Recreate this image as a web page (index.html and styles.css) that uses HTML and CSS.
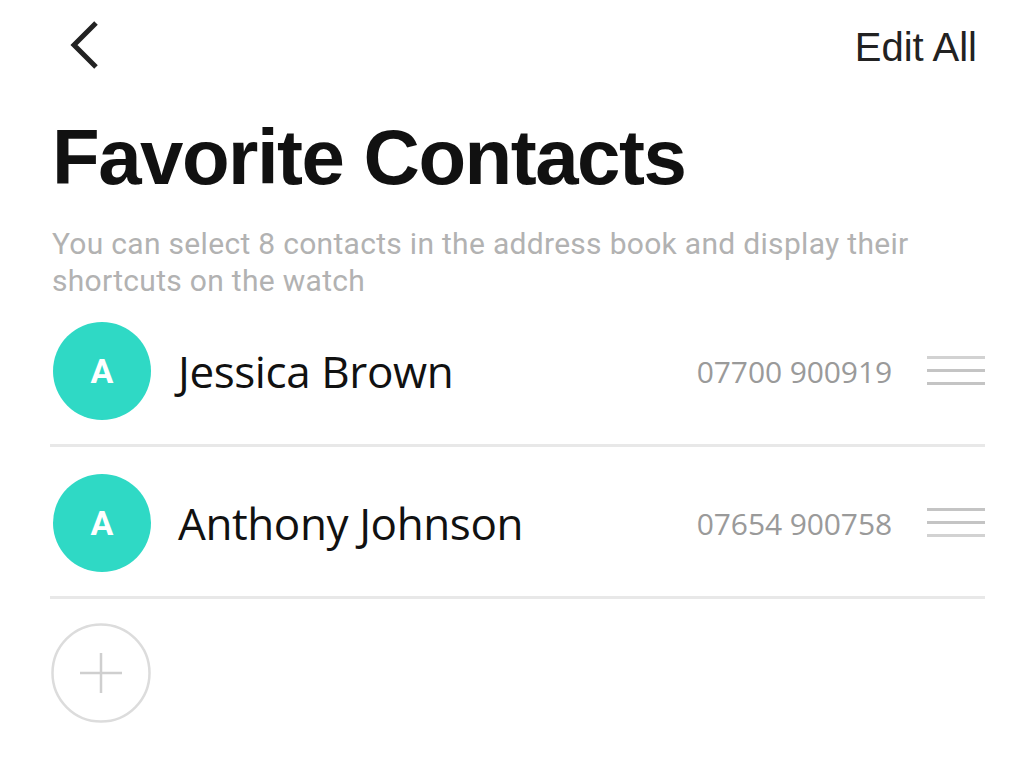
FILE: index.html
```html
<!DOCTYPE html>
<html lang="en">
<head>
<meta charset="utf-8">
<title>Favorite Contacts</title>
<link rel="stylesheet" href="styles.css">
</head>
<body>
<div class="screen">
  <header class="topbar">
    <button class="back" aria-label="Back">
      <svg width="32" height="50" viewBox="0 0 32 50"><path d="M26 3 L4 25 L26 47" fill="none" stroke="#222" stroke-width="5" stroke-linejoin="miter"/></svg>
    </button>
    <span class="edit">Edit All</span>
  </header>
  <h1 class="title">Favorite Contacts</h1>
  <p class="desc">You can select 8 contacts in the address book and display their shortcuts on the watch</p>
  <ul class="list">
    <li class="row">
      <div class="avatar">A</div>
      <div class="name">Jessica Brown</div>
      <div class="phone">07700 900919</div>
      <svg class="handle" width="58" height="34" viewBox="0 0 58 34"><rect x="0" y="2" width="58" height="3" fill="#d2d2d2"/><rect x="0" y="15" width="58" height="3" fill="#c4c4c4"/><rect x="0" y="28" width="58" height="3" fill="#c4c4c4"/></svg>
    </li>
    <li class="row">
      <div class="avatar">A</div>
      <div class="name">Anthony Johnson</div>
      <div class="phone">07654 900758</div>
      <svg class="handle" width="58" height="34" viewBox="0 0 58 34"><rect x="0" y="2" width="58" height="3" fill="#c4c4c4"/><rect x="0" y="15" width="58" height="3" fill="#c4c4c4"/><rect x="0" y="28" width="58" height="3" fill="#d2d2d2"/></svg>
    </li>
  </ul>
  <button class="add" aria-label="Add contact">
    <svg width="100" height="100" viewBox="0 0 100 100"><circle cx="50" cy="50" r="48.5" fill="none" stroke="#dcdcdc" stroke-width="2.5"/><path d="M29 50 H71 M50 30 V70" stroke="#cfcfcf" stroke-width="2.5"/></svg>
  </button>
</div>
</body>
</html>
```

FILE: styles.css
```css
html, body {
  margin: 0;
  padding: 0;
  background: #ffffff;
}

.screen {
  width: 1024px;
  height: 773px;
  box-sizing: border-box;
  padding: 0 39px 0 50px;
  font-family: Roboto, "Liberation Sans", sans-serif;
  overflow: hidden;
}

.topbar {
  height: 90px;
  display: flex;
  align-items: center;
  justify-content: space-between;
}

.back {
  border: 0;
  background: none;
  padding: 0;
  margin-left: 20px;
  display: flex;
}

.edit {
  font-family: "Liberation Sans", Arial, sans-serif;
  font-size: 40px;
  color: #222;
  margin-right: 8px;
  margin-top: 4px;
}

.title {
  margin: 28px 0 0 2px;
  font-family: "Liberation Sans", Arial, sans-serif;
  font-weight: 700;
  font-size: 78px;
  line-height: 78px;
  letter-spacing: -1.5px;
  color: #111;
}

.desc {
  margin: 29px 0 0 2px;
  font-family: Roboto, "Liberation Sans", sans-serif;
  font-size: 30px;
  line-height: 37px;
  letter-spacing: 0.3px;
  color: #b2b2b2;
  max-width: 900px;
}

.list {
  list-style: none;
  margin: -4px 0 0 0;
  padding: 0;
}

.row {
  display: flex;
  align-items: center;
  padding: 27px 0 24px 0;
  border-bottom: 3px solid #e8e8e8;
}

.avatar {
  width: 98px;
  height: 98px;
  border-radius: 50%;
  background: #2fd9c5;
  color: #fff;
  font-family: Roboto, sans-serif;
  font-weight: 700;
  font-size: 34px;
  display: flex;
  align-items: center;
  justify-content: center;
  margin-left: 3px;
  flex: none;
}

.name {
  flex: 1;
  margin-left: 27px;
  font-family: "Open Sans", sans-serif;
  font-size: 44px;
  letter-spacing: -0.4px;
  color: #111;
}

.phone {
  font-family: "Open Sans", sans-serif;
  font-size: 30px;
  letter-spacing: -0.1px;
  color: #9a9a9a;
}

.handle {
  margin-left: 35px;
  flex: none;
}

.add {
  border: 0;
  background: none;
  padding: 0;
  margin: 24px 0 0 1px;
  display: flex;
}
```
